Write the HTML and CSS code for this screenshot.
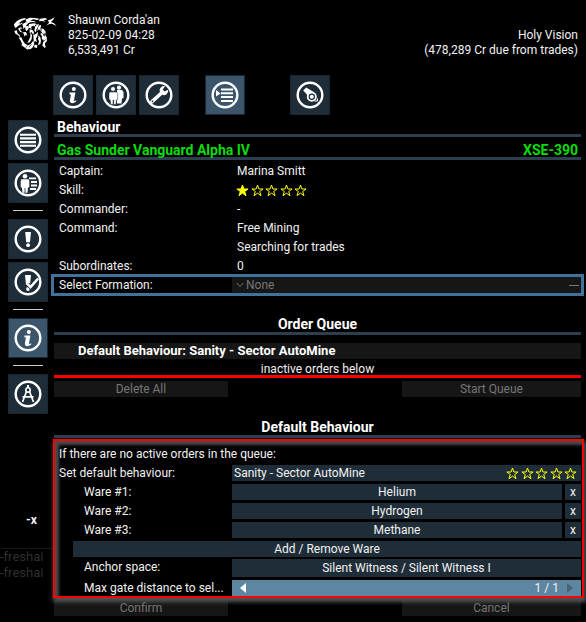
FILE: index.html
```html
<!DOCTYPE html>
<html lang="en">
<head>
<meta charset="utf-8">
<title>Ship Behaviour</title>
<link rel="stylesheet" href="styles.css">
</head>
<body>
<svg class="defs" aria-hidden="true">
  <symbol id="ring" viewBox="0 0 40 40"><circle cx="20" cy="20" r="12.3" fill="none" stroke="#fff" stroke-width="2.4"/></symbol>
  <symbol id="info" viewBox="0 0 40 40"><use href="#ring"/><circle cx="20.8" cy="14" r="2" fill="#fff"/><path d="M16.5 17.6h5.9l-1.5 8.1q0 .8 2.3-.4v1.1q-2.8 2.2-5 1.6-1.7-.6-1.3-2.8l1.1-5.8h-1.5z" fill="#fff"/></symbol>
  <symbol id="star" viewBox="0 0 13 13"><path d="M6.5 1l1.4 4h4.2L8.7 7.5l1.3 4.2-3.5-2.6L3 11.7l1.3-4.2L.9 5h4.2z" stroke="#ff0" stroke-width="1"/></symbol>
</svg>

<header class="header">
  <svg class="emblem" viewBox="0 0 150 135" aria-hidden="true">
    <g fill="#fff">
      <path d="M12 43l8-9 10-6 14-4 5 3-13 5-9 7-5 9-9 2zM48 28l12-5 16 1 14 3-8 3-13-2-9 4 11 1 9 4-14-1-11 2-8-4zM90 26l16-2 6 4-11 3 5 4-10-2-9 1zM114 31l10-3 10-7-5 9-6 6 9 4 8 8-14-7-8 1-9 5 8-9z"/>
      <path d="M15 49l7-6 8-4 10-1-7 5-9 5-8 7zM37 43l10-6 13-1-7 5-6 8-7 8-1-8zM57 42l16-2 9 3-8 2 4 6-8-4-7 4 3 7-8-5-5 5zM24 56l8-4 6 3-8 2 3 6 6 5-9-3zM13 63l8-2 1 8 7 6 1 8-6-8-8-4z"/>
      <path d="M75 51l5-7 7-2-3 8-4 7-2 10-5-5zM90 44l4 3-3 7 2 10-6-6-5 5 2-11zM59 58l8 2 5 6-2 9-5-8-6 2zM70 75l8-3 6-7-1 11-5 10 3 10-6-3-5 8 1-11z"/>
      <path d="M26 83l8-1 4 9 4 9-7-4-5-7zM40 94l5 7 9 5 8-4 7-9 4 8-4 10-8 7-11-1-8-7-8-4zM61 68l5 7-1 12-5 9-8 4 5-11 4-9zM39 67l9-1 4 11-5-3-3 6z"/>
      <path d="M94 55l7 2 6 8-1 10-5-9-6-3zM92 68l7 5 5 10-4 9-5-7 1-7-4-4zM85 76l6 6 2 10-2 10-7 4 3-13-3-6zM104 73l6 8 1 12-7 7 2 7-8 1 1-11 5-9zM74 104l8 1-1 9-9-2zM45 49l9-1 1 10-6 6-3-7z"/>
    </g>
    <path d="M35 92l6 15 12 9 11-4 5-9M103 79l2 12-5 15 6 6M95 62l6 9" fill="none" stroke="#fff" stroke-width="5"/>
    <g stroke="#000" stroke-width="2" fill="none"><path d="M29 42l8-7M51 46l10-8M81 37l14 4M57 112l7-10M78 86l8-4M99 96l8-7M47 113l6-7"/></g>
  </svg>
  <div class="player"><div>Shauwn Corda'an</div><div>825-02-09 04:28</div><div>6,533,491 Cr</div></div>
  <div class="affiliation"><div>Holy Vision</div><div>(478,289 Cr due from trades)</div></div>
</header>

<nav class="toolbar" aria-label="Object menu">
  <button class="tile" aria-label="Information"><svg viewBox="0 0 40 40"><use href="#info"/></svg></button>
  <button class="tile" aria-label="Crew"><svg viewBox="0 0 40 40"><use href="#ring"/><g fill="#fff"><circle cx="23" cy="12.7" r="2.1"/><path d="M21 15h5l1.5 2v6l-1.5.6-.5 5H21z"/><circle cx="17" cy="14" r="2.3" stroke="#1f2d38" stroke-width=".5"/><path d="M13.5 17h7l1.2 1.5v6l-1.3.4-.5 4.6h-2.2V25h-.7v4.5h-2.2l-.6-4.6-1.2-.4v-6z" stroke="#1f2d38" stroke-width=".5"/></g></svg></button>
  <button class="tile" aria-label="Loadout"><svg viewBox="0 0 40 40"><use href="#ring"/><path d="M13 26.7L22.5 18" stroke="#fff" stroke-width="3.6" stroke-linecap="round"/><path d="M21.2 17.5q-1.6-3.5 1.4-5.8 1.5-.9 3.4-.5l-2.3 3.2 1.9 2.1 3.6-1.7q.6 3-1.9 4.8-2 1.2-4.2.2z" fill="#fff"/><circle cx="13.5" cy="26.3" r=".9" fill="#1f2d38"/></svg></button>
  <button class="tile active orders" aria-label="Behaviour"><svg viewBox="0 0 40 40"><use href="#ring"/><path d="M11 15l4.5 3.4L11 21.5z" fill="#fff"/><path d="M16 14.5h12M16 18.3h12M16 22.1h12M16 25.9h12" stroke="#fff" stroke-width="2"/></svg></button>
  <button class="tile signals" aria-label="Global orders"><svg viewBox="0 0 40 40"><use href="#ring"/><path d="M13.2 15.6l3-3 7.5 4.3-4.5 5z" fill="#fff"/><circle cx="21.8" cy="21.7" r="4.1" fill="#1f2d38" stroke="#fff" stroke-width="1.8"/><circle cx="21.8" cy="21.7" r="2" fill="#fff"/><path d="M24.5 26h3v-2.5" fill="none" stroke="#fff"/></svg></button>
</nav>

<div class="workspace">
  <aside class="side">
    <nav class="rail" aria-label="Lists">
      <button class="tile" aria-label="Object list"><svg viewBox="0 0 40 40"><use href="#ring"/><path d="M12 14.7h16M12 18.4h16M12 22.1h16M12 25.8h16" stroke="#fff" stroke-width="2.1"/></svg></button>
      <button class="tile" aria-label="Property owned"><svg viewBox="0 0 40 40"><use href="#ring"/><g fill="#fff"><circle cx="17" cy="13.2" r="2.3"/><path d="M13.3 16.3h7.2l.8 1.5v6.4l-1.3.3-.5 5.2h-2.1V25h-.8v4.7h-2.1l-.6-5.2-1.2-.3v-6z"/></g><path d="M21 15.4h7M23 19h6M23 22.5h6M22 26h6" stroke="#fff" stroke-width="1.8"/></svg></button>
      <hr>
      <button class="tile" aria-label="Missions"><svg viewBox="0 0 40 40"><use href="#ring"/><path d="M17.2 13h5.8l-1 10.2h-3.8z" fill="#fff"/><circle cx="20.1" cy="26.2" r="1.9" fill="#fff"/></svg></button>
      <button class="tile" aria-label="Accepted missions"><svg viewBox="0 0 40 40"><use href="#ring"/><path d="M17 13h6l-1 10h-4z" fill="#fff"/><circle cx="20" cy="27" r="1.9" fill="#fff"/><path d="M19.5 22l3 3.2 7-8" stroke="#1f2d38" stroke-width="4" fill="none"/><path d="M19.5 22l3 3.2 7.5-8.5" stroke="#fff" stroke-width="2.5" fill="none"/></svg></button>
      <hr>
      <button class="tile active" aria-label="Info"><svg viewBox="0 0 40 40"><use href="#info"/></svg></button>
      <hr>
      <button class="tile" aria-label="Plot planning"><svg viewBox="0 0 40 40"><use href="#ring"/><path d="M18.5 17.5L14.5 28M21.5 17.5l4 10.5M14.5 22.8h11" stroke="#fff" stroke-width="1.7"/><path d="M20 11v3" stroke="#fff" stroke-width="2"/><circle cx="20" cy="16" r="2.2" fill="none" stroke="#fff" stroke-width="1.6"/></svg></button>
    </nav>
    <div class="marker">-x</div>
    <div class="ghost"><div>-freshai</div><div>-freshai</div></div>
  </aside>

  <main class="panel">
    <h1 class="title">Behaviour</h1>
    <h2 class="ship"><span>Gas Sunder Vanguard Alpha IV</span><span>XSE-390</span></h2>
    <dl class="facts">
      <dt>Captain:</dt><dd>Marina Smitt</dd>
      <dt>Skill:</dt><dd class="rating" role="img" aria-label="1 of 5"><svg class="full"><use href="#star"/></svg><svg><use href="#star"/></svg><svg><use href="#star"/></svg><svg><use href="#star"/></svg><svg><use href="#star"/></svg></dd>
      <dt>Commander:</dt><dd>-</dd>
      <dt>Command:</dt><dd>Free Mining</dd>
      <dd class="continued">Searching for trades</dd>
      <dt>Subordinates:</dt><dd>0</dd>
    </dl>
    <div class="formation">
      <label for="formation">Select Formation:</label>
      <div class="dropdown muted"><svg class="chevron" viewBox="0 0 8 6"><path d="M.7 1L4 4.5 7.3 1" fill="none" stroke="#777"/></svg><select id="formation" disabled><option>None</option></select><span class="dash"></span></div>
    </div>

    <h2 class="section">Order Queue</h2>
    <div class="current">Default Behaviour: Sanity - Sector AutoMine</div>
    <div class="inactive">inactive orders below</div>
    <div class="actions"><button disabled>Delete All</button><button disabled>Start Queue</button></div>

    <h2 class="section defaults">Default Behaviour</h2>
    <form class="settings">
      <p class="note">If there are no active orders in the queue:</p>
      <div class="row"><label for="behaviour">Set default behaviour:</label>
        <div class="dropdown"><select id="behaviour"><option>Sanity - Sector AutoMine</option></select><span class="rating" role="img" aria-label="0 of 5"><svg><use href="#star"/></svg><svg><use href="#star"/></svg><svg><use href="#star"/></svg><svg><use href="#star"/></svg><svg><use href="#star"/></svg></span></div></div>
      <div class="row sub"><label for="ware1">Ware #1:</label><div class="ware"><button type="button" id="ware1">Helium</button><button type="button">x</button></div></div>
      <div class="row sub"><label for="ware2">Ware #2:</label><div class="ware"><button type="button" id="ware2">Hydrogen</button><button type="button">x</button></div></div>
      <div class="row sub"><label for="ware3">Ware #3:</label><div class="ware"><button type="button" id="ware3">Methane</button><button type="button">x</button></div></div>
      <button type="button" class="add">Add / Remove Ware</button>
      <div class="row sub anchor"><label for="anchor">Anchor space:</label><button type="button" id="anchor">Silent Witness / Silent Witness I</button></div>
      <div class="row sub distance"><label for="gates">Max gate distance to sel...</label>
        <div class="stepper"><button type="button" aria-label="Less"><svg viewBox="0 0 6 10"><path d="M6 0v10L0 5z" fill="#fff"/></svg></button><output id="gates">1 / 1</output><button type="button" aria-label="More"><svg viewBox="0 0 6 10"><path d="M0 0v10l6-5z" fill="#4c6372"/></svg></button></div></div>
    </form>
    <div class="actions confirm"><button disabled>Confirm</button><button disabled>Cancel</button></div>
  </main>
</div>
</body>
</html>
```
FILE: styles.css
```css
* { box-sizing: border-box; }
body {
  margin: 0;
  background: #000;
  color: #f2f2f2;
  font: 12px/15px Roboto, "Liberation Sans", sans-serif;
}
h1, h2, p, dl, dd { margin: 0; }
button, select { margin: 0; padding: 0; border: 0; font: inherit; color: inherit; }
button { background: #1f2d38; text-align: center; }
svg { display: block; }
.defs { position: absolute; width: 0; height: 0; }

.header { display: flex; padding: 10px 8px 0 10px; height: 75px; }
.emblem { width: 50px; height: 45px; }
.player { margin: 3px 0 0 8px; }
.affiliation { margin: 18px 0 0 auto; text-align: right; }

.tile { display: block; width: 40px; height: 40px; box-shadow: inset 0 0 0 1px #192732; }
.tile svg { width: 40px; height: 40px; }
.active { background: #3b566a; }
.toolbar { display: flex; gap: 3px; padding-left: 53px; }
.orders { margin-left: 23px; }
.signals { margin-left: 42px; }

.workspace { display: grid; grid-template-columns: 54px 1fr; padding: 5px 5px 0 0; }
.rail { display: flex; flex-direction: column; gap: 3px; padding-left: 8px; }
.rail hr { width: 30px; height: 1px; margin: 4px 0 5px 5px; border: 0; background: #ccc; }
.marker { margin: 99px 0 0 26px; font-weight: 700; }
.ghost { margin-top: 20px; border-top: 1px solid #151515; color: #303030; font-size: 13px; line-height: 16px; white-space: nowrap; }

.title, .section { border-bottom: 3px solid #2b3f4f; font-size: 14px; font-weight: 700; line-height: 15px; color: #fff; }
.title { height: 17px; padding-left: 3px; }
.ship {
  display: flex; justify-content: space-between;
  height: 23px; padding: 6px 3px 0;
  border-bottom: 3px solid #2b3f4f;
  color: #0bdc0b; font-size: 14px; font-weight: 700; line-height: 15px;
}
.facts { display: grid; grid-template-columns: 177px 1fr; line-height: 19px; padding: 2px 0 0 5px; }
.facts dd { padding-left: 1px; }
.continued { grid-column: 2; }
.rating { display: flex; justify-content: space-between; align-items: center; width: 71px; }
.rating svg { width: 13px; height: 13px; fill: none; }
.rating .full { fill: #ff0; }
.facts .rating { padding: 0; }

.formation {
  display: grid; grid-template-columns: 178px 1fr;
  height: 22px; margin: -2px -3px 0;
  border: 3px solid #41739a;
  line-height: 16px;
}
.formation label { padding-left: 5px; }
.dropdown { display: flex; align-items: center; height: 16px; padding: 0 4px 0 2px; background: #1f2d38; }
.dropdown select { flex: 1; height: 16px; background: transparent; appearance: none; opacity: 1; line-height: 16px; }
.dropdown option { background: #1f2d38; }
.muted { padding-right: 2px; background: #161616; color: #777; }
.chevron { width: 8px; height: 6px; margin: 0 2px; }
.dash { width: 10px; height: 1px; background: #777; }

.section { margin-top: 21px; height: 18px; text-align: center; }
.current { height: 16px; margin-top: 8px; padding-left: 24px; background: #161616; color: #fff; font-size: 13px; font-weight: 700; line-height: 16px; }
.inactive { height: 19px; border-bottom: 3px solid #f00; padding-top: 3px; text-align: center; line-height: 15px; }
.actions { display: flex; justify-content: space-between; margin-top: 3px; }
.actions button { width: 34%; height: 16px; background: #161616; color: #777; line-height: 16px; }
.actions button:first-child { width: 33%; }
.defaults { margin-top: 23px; }

.settings {
  position: relative;
  margin: 1px -3px 0 -1px;
  padding: 5px 1px 0 0;
  border: 2px solid #f00;
  box-shadow: 1px 3px 4px 1px #555, inset 3px 3px 3px 1px #4a4a4a;
  line-height: 16px;
}
.note { padding: 0 0 3px 4px; }
.row { display: grid; grid-template-columns: 177px 1fr; margin-bottom: 3px; }
.row label { padding-left: 4px; white-space: nowrap; }
.sub label { padding-left: 29px; }
.row button, .add { height: 16px; line-height: 16px; }
.ware { display: grid; grid-template-columns: 1fr 16px; gap: 3px; }
.settings .add { display: block; width: calc(100% - 18px); margin: 0 0 2px 18px; }
.settings .anchor button { height: 18px; line-height: 18px; }
.distance { margin-bottom: 0; }
.stepper { display: flex; align-items: center; justify-content: space-between; height: 16px; padding: 0 8px; background: #5d86a2; }
.stepper button { background: transparent; }
.stepper svg { width: 6px; height: 10px; margin: 3px 0; }
.stepper output { margin: 0 8px 0 auto; }
.confirm { margin-top: 2px; }
```
